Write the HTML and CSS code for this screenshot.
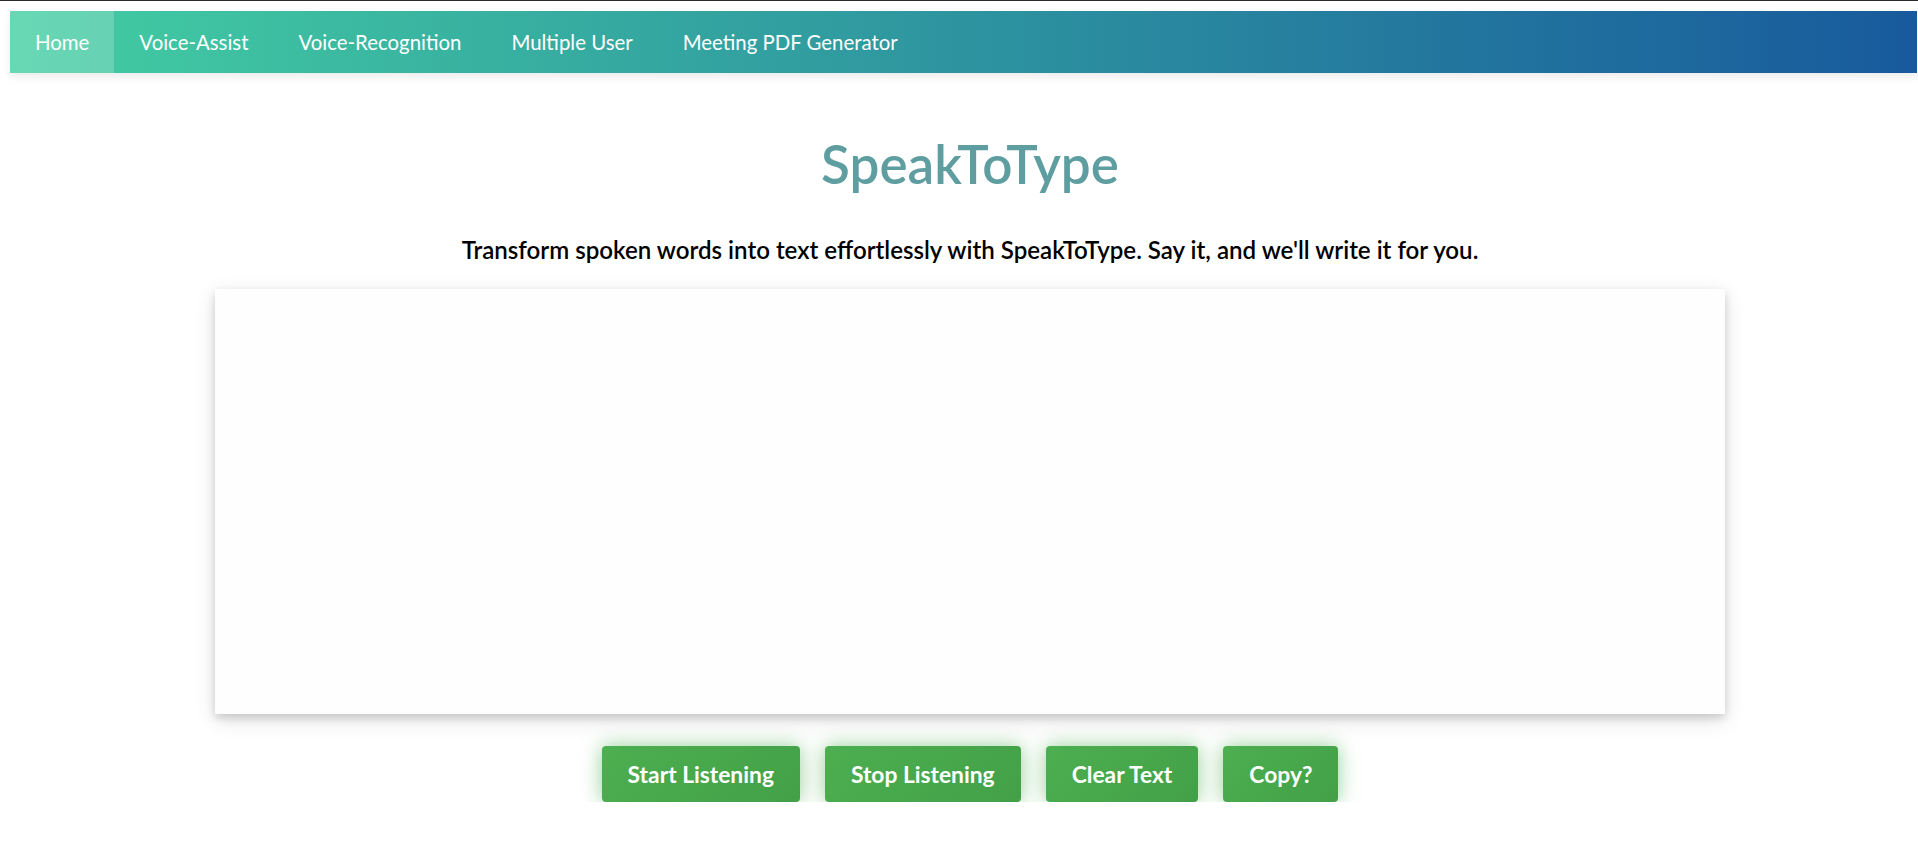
FILE: index.html
```html
<!DOCTYPE html>
<html lang="en">
<head>
<meta charset="utf-8">
<title>SpeakToType</title>
<link rel="stylesheet" href="styles.css">
</head>
<body>
<div class="topline"></div>
<nav class="navbar">
  <a class="nav-link active" href="#">Home</a>
  <a class="nav-link" href="#">Voice-Assist</a>
  <a class="nav-link" href="#">Voice-Recognition</a>
  <a class="nav-link" href="#">Multiple User</a>
  <a class="nav-link" href="#">Meeting PDF Generator</a>
</nav>
<main class="main">
  <h1 class="title">SpeakToType</h1>
  <p class="subtitle">Transform spoken words into text effortlessly with SpeakToType. Say it, and we'll write it for you.</p>
  <textarea class="transcript" aria-label="Transcript"></textarea>
  <div class="actions">
    <button class="btn" type="button">Start Listening</button>
    <button class="btn" type="button">Stop Listening</button>
    <button class="btn" type="button">Clear Text</button>
    <button class="btn" type="button">Copy?</button>
  </div>
</main>
</body>
</html>
```
FILE: styles.css
```css
html, body {
  margin: 0;
  padding: 0;
  background: #ffffff;
}

body {
  font-family: "Lato", "Open Sans", sans-serif;
  color: #000;
  overflow: hidden;
}

.topline {
  height: 1px;
  background: #2b2b2b;
}

.navbar {
  display: flex;
  align-items: stretch;
  height: 62px;
  margin: 10px 1px 0 10px;
  background: linear-gradient(90deg, #43cea2 0%, #185a9d 100%);
  box-shadow: 0 4px 8px rgba(0, 0, 0, 0.08);
}

.nav-link {
  display: flex;
  align-items: center;
  padding: 0 25px 1px;
  color: #ffffff;
  font-size: 20.4px;
  font-weight: 400;
  text-decoration: none;
}

.nav-link.active {
  background: rgba(255, 255, 255, 0.2);
}

.main {
  margin-left: 22px;
  display: flex;
  flex-direction: column;
  align-items: center;
}

.title {
  margin: 59px 0 0;
  font-size: 53px;
  line-height: 64px;
  font-weight: 600;
  color: #5f9ea0;
}

.subtitle {
  margin: 39px 0 0;
  font-size: 24.1px;
  line-height: 29px;
  font-weight: 600;
  color: #000;
}

.transcript {
  display: block;
  box-sizing: border-box;
  width: 1510px;
  height: 425px;
  margin: 25px 0 0;
  padding: 12px;
  border: none;
  outline: none;
  resize: none;
  background: #fefefe;
  font-family: "Lato", sans-serif;
  font-size: 18px;
  box-shadow: 0 4px 8px rgba(0, 0, 0, 0.14), 0 6px 20px rgba(0, 0, 0, 0.12);
}

.actions {
  display: flex;
  justify-content: center;
  gap: 25px;
  margin-top: 32px;
}

.btn {
  height: 56px;
  padding: 0 26px;
  border: none;
  border-radius: 4px;
  background: linear-gradient(135deg, #4caf50 0%, #43a047 100%);
  color: #ffffff;
  font-family: "Lato", sans-serif;
  font-size: 22.8px;
  font-weight: 700;
  cursor: pointer;
  box-shadow: 0 0 20px rgba(76, 175, 80, 0.6);
}
```
